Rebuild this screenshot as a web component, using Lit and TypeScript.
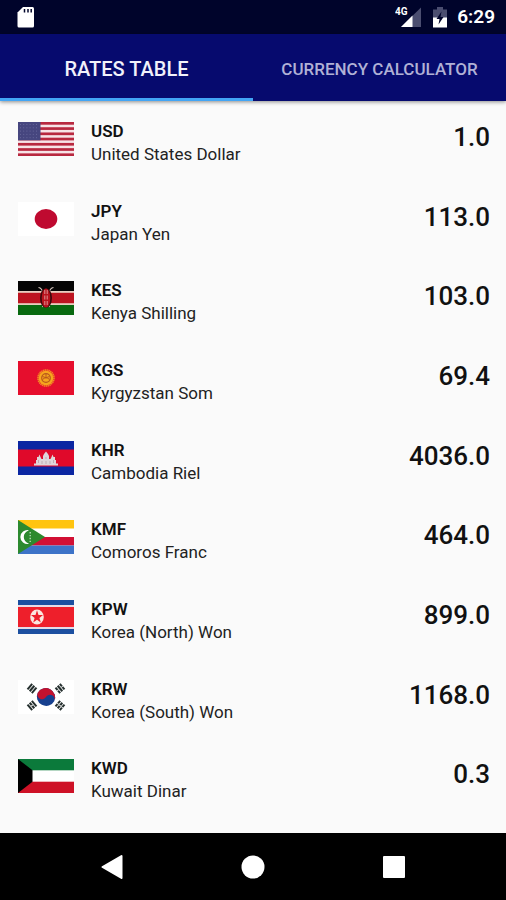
import { LitElement, html, css, svg, type TemplateResult } from "lit";
import { customElement, property, state } from "lit/decorators.js";
import { classMap } from "lit/directives/class-map.js";

interface Rate {
  code: string;
  name: string;
  value: string;
}

const RATES: Rate[] = [
  { code: "USD", name: "United States Dollar", value: "1.0" },
  { code: "JPY", name: "Japan Yen", value: "113.0" },
  { code: "KES", name: "Kenya Shilling", value: "103.0" },
  { code: "KGS", name: "Kyrgyzstan Som", value: "69.4" },
  { code: "KHR", name: "Cambodia Riel", value: "4036.0" },
  { code: "KMF", name: "Comoros Franc", value: "464.0" },
  { code: "KPW", name: "Korea (North) Won", value: "899.0" },
  { code: "KRW", name: "Korea (South) Won", value: "1168.0" },
  { code: "KWD", name: "Kuwait Dinar", value: "0.3" },
];

/* Every flag is drawn on a 56 x 34 canvas. */
const trigram = (x: number, y: number, angle: number, broken: number[]) => svg`
  <g transform="translate(${x} ${y}) rotate(${angle})" fill="#26302f">
    <rect x="-3.6" y="-3.8" width="7.2" height="2" />
    <rect x="-3.6" y="-1" width="7.2" height="2" />
    <rect x="-3.6" y="1.8" width="7.2" height="2" />
    ${broken.map((i) => svg`<rect x="-.4" y=${-3.8 + i * 2.8} width=".8" height="2" fill="#fff" />`)}
  </g>`;

const FLAGS: Record<string, TemplateResult> = {
  USD: svg`
    <rect width="56" height="34" fill="#f7e3e6" />
    ${[0, 1, 2, 3, 4, 5, 6].map(
      (i) => svg`<rect y=${(i * 2 * 34) / 13} width="56" height="2.7" fill="#b8283f" />`
    )}
    <rect width="22.5" height="18.3" fill="#46467f" />
    ${[2.5, 5.8, 9.1, 12.4, 15.7].map(
      (y) => svg`<path d="M2 ${y}H21" stroke="#66669a" stroke-width="1" stroke-dasharray="1 2.2" />`
    )}`,
  JPY: svg`
    <rect width="56" height="34" fill="#fff" />
    <ellipse cx="28" cy="17" rx="11.3" ry="10" fill="#bf0a30" />`,
  KES: svg`
    <rect width="56" height="34" fill="#050505" />
    <rect y="10" width="56" height="14" fill="#e8cfc0" />
    <rect y="11.8" width="56" height="10.4" fill="#bd1420" />
    <rect y="24" width="56" height="10" fill="#08690f" />
    <path d="M20.5 6.5Q24 7 25 12L31.5 26M35.5 6.5Q32 7 31 12L24.5 26" fill="none" stroke="#d9c9c2" stroke-width="1.1" />
    <ellipse cx="28" cy="17" rx="6" ry="9.8" fill="#3d080c" />
    <ellipse cx="28" cy="17" rx="4.3" ry="9.6" fill="#b9121d" />
    <path d="M26.8 9v16M29.2 9v16" stroke="#e3a3a3" stroke-width=".9" stroke-dasharray="4 1.5" />`,
  KGS: svg`
    <rect width="56" height="34" fill="#e60e2d" />
    <circle cx="28" cy="17" r="8" fill="none" stroke="#f08a22" stroke-width="1.6" stroke-dasharray="1.4 .5" />
    <circle cx="28" cy="17" r="7.3" fill="#f6a51d" />
    <circle cx="28" cy="17" r="4.3" fill="none" stroke="#b9581c" stroke-width="1.2" />
    <path d="M24.5 15.5Q28 18 31.5 15.5M24.5 18.5Q28 15 31.5 18.5M28 13v4" fill="none" stroke="#b9581c" stroke-width="1" />`,
  KHR: svg`
    <rect width="56" height="34" fill="#0b26a2" />
    <rect y="8.5" width="56" height="17" fill="#e0092a" />
    <path d="M16 24.5V22.5H18V19H19V16H20.5L21.500 13.5L22.5 16L23.5 18H25V15L26 13L28 10.5L30 13L31 15V18H32.500L33.500 16L34.500 13.5L35.500 16H37V19H38V22.5H40V24.5Z" fill="#ded6da" />
    <path d="M20.5 19v3M24 20v3M28 16v2M28 20v3M32 20v3M35.5 19v3" stroke="#bfaeb4" stroke-width="1" />`,
  KMF: svg`
    <rect width="56" height="34" fill="#fff" />
    <rect width="56" height="8.5" fill="#ffc40f" />
    <rect y="17" width="56" height="8.5" fill="#d21034" />
    <rect y="25.5" width="56" height="8.5" fill="#3d73c8" />
    <path d="M0 0L27 17L0 34Z" fill="#2c8a2f" />
    <path d="M11 10.2A7 7 0 1 0 11 23.8A9 7.5 0 0 1 11 10.2Z" fill="#fff" />
    <path d="M12.2 12v10.5" stroke="#c8e4c8" stroke-width="1.2" stroke-dasharray="1.4 1.5" />`,
  KPW: svg`
    <rect width="56" height="34" fill="#1c4fa0" />
    <rect y="5" width="56" height="24" fill="#e5dbe6" />
    <rect y="7" width="56" height="20" fill="#ee1f2b" />
    <ellipse cx="19" cy="17" rx="6.8" ry="7.6" fill="#fbe6df" />
    <path d="M19 10.3L20.5 15H25L21.4 17.9L22.8 22.6L19 19.7L15.2 22.6L16.6 17.9L13 15H17.5Z" fill="#ee1f2b" />`,
  KRW: svg`
    <rect width="56" height="34" fill="#fff" />
    <g transform="rotate(28 28 17)">
      <ellipse cx="28" cy="17" rx="9.3" ry="8.8" fill="#17408f" />
      <path d="M18.7 17A9.3 8.8 0 0 1 37.3 17A4.65 4.4 0 0 0 28 17A4.65 4.4 0 0 1 18.7 17Z" fill="#c4122f" />
    </g>
    ${trigram(14, 8.5, -50, [])}
    ${trigram(42, 8.5, 50, [0, 2])}
    ${trigram(14, 25.5, 50, [1])}
    ${trigram(42, 25.5, -50, [0, 1, 2])}`,
  KWD: svg`
    <rect width="56" height="34" fill="#fff" />
    <rect width="56" height="11.3" fill="#0b7a3b" />
    <rect y="22.7" width="56" height="11.3" fill="#ce1126" />
    <path d="M0 0L14.5 11.3V22.7L0 34Z" fill="#000" />`,
};

@customElement("currency-flag")
class CurrencyFlag extends LitElement {
  @property() code = "";

  static styles = css`
    :host {
      display: block;
      width: 56px;
      height: 34px;
    }
    .flag {
      display: block;
      width: 100%;
      height: 100%;
    }
  `;

  render() {
    return html`<svg class="flag" viewBox="0 0 56 34" aria-hidden="true">${FLAGS[this.code]}</svg>`;
  }
}

@customElement("status-bar")
class StatusBar extends LitElement {
  static styles = css`
    :host {
      display: flex;
      align-items: center;
      box-sizing: border-box;
      height: 34px;
      padding: 0 11px 0 17px;
      background: #00042b;
      color: #fff;
    }
    .spacer {
      flex: 1;
    }
    .signal {
      margin-right: 11px;
    }
    .battery {
      margin-right: 10px;
    }
    .small {
      font: 700 10px Roboto, sans-serif;
    }
    .clock {
      font-size: 19px;
      line-height: 36px;
      font-weight: 600;
    }
  `;

  render() {
    return html`
      <svg width="18" height="22" viewBox="0 0 18 22" aria-hidden="true">
        <path d="M6 1H15.5Q17 1 17 2.5V20Q17 21.5 15.5 21.5H2Q.5 21.5 .5 20V6.5Z" fill="#fff" />
        <path d="M7.5 3v3.5M11 3v3.5M14.2 3v3.5" stroke="#00042b" stroke-width="1.5" />
      </svg>
      <span class="spacer"></span>
      <svg class="signal" width="27" height="22" viewBox="0 0 27 22" aria-hidden="true">
        <path d="M6 21L26 1.5V21Z" fill="#4b4e70" />
        <path d="M6 21L17.5 9.5V21Z" fill="#fff" />
        <text class="small" x="0" y="9" fill="#fff">4G</text>
      </svg>
      <svg class="battery" width="14" height="22" viewBox="0 0 14 22" aria-hidden="true">
        <path d="M0 3.5H4V1H10V3.5H14V12H0Z" fill="#4b4e70" />
        <path d="M0 11.5H14V21.5H0Z" fill="#fff" />
        <path d="M8.5 5.5L3.5 13H6.5L5.5 18.5L10.5 11H7.5Z" fill="#00042b" />
      </svg>
      <span class="clock">6:29</span>
    `;
  }
}

@customElement("system-nav")
class SystemNav extends LitElement {
  static styles = css`
    :host {
      display: flex;
      justify-content: center;
      align-items: center;
      gap: 93px;
      height: 67px;
      background: #000;
    }
    .key {
      display: grid;
      place-items: center;
      width: 48px;
      height: 48px;
      padding: 0;
      border: 0;
      background: none;
    }
  `;

  render() {
    return html`
      <button class="key" aria-label="Back">
        <svg width="22" height="26" viewBox="0 0 22 26">
          <path d="M20.5 2L1.5 13L20.5 24Z" fill="#fff" stroke="#fff" stroke-width="2" stroke-linejoin="round" />
        </svg>
      </button>
      <button class="key" aria-label="Home">
        <svg width="24" height="24" viewBox="0 0 24 24"><circle cx="12" cy="12" r="11.5" fill="#fff" /></svg>
      </button>
      <button class="key" aria-label="Recent apps">
        <svg width="22" height="22" viewBox="0 0 22 22"><rect width="22" height="22" rx="1" fill="#fff" /></svg>
      </button>
    `;
  }
}

@customElement("app-root")
class AppRoot extends LitElement {
  @state() private tab = 0;

  static styles = css`
    :host {
      display: flex;
      flex-direction: column;
      min-height: 100vh;
      background: #fafafa;
      color: #111;
      font-family: Roboto, "Noto Sans", sans-serif;
    }
    .tabs {
      display: grid;
      grid-template-columns: 1fr 1fr;
      height: 67px;
      background: #060a6e;
      box-shadow: 0 1px 4px rgba(0, 0, 0, 0.45);
    }
    .tab {
      padding: 5px 0 0;
      border: 0;
      border-bottom: 3px solid transparent;
      background: none;
      color: #b0b1d6;
      font-family: inherit;
      font-size: 17px;
      font-weight: 500;
      white-space: nowrap;
    }
    .tab.active {
      border-bottom-color: #42a5f5;
      color: #f1f1fa;
      font-size: 20px;
    }
    .rates,
    .rows {
      display: flex;
      flex: 1;
      flex-direction: column;
    }
    .rates {
      padding-bottom: 15px;
    }
    .row {
      display: grid;
      grid-template-columns: 56px 1fr auto;
      column-gap: 17px;
      align-items: start;
      flex: 1;
      box-sizing: border-box;
      min-height: 78px;
      padding: 19px 16px 0 18px;
      text-align: left;
    }
    .cell {
      padding: 0;
      font-weight: 400;
    }
    .flag {
      padding-top: 2px;
    }
    .code,
    .name {
      display: block;
      font-size: 17px;
      line-height: 23px;
    }
    .code {
      font-weight: 600;
    }
    .name {
      color: #222;
    }
    .value {
      font-size: 26px;
      line-height: 34px;
      font-weight: 500;
    }
  `;

  private renderTab(label: string, index: number) {
    const active = this.tab === index;
    return html`<button
      class=${classMap({ tab: true, active })}
      role="tab"
      aria-selected=${active ? "true" : "false"}
      @click=${() => (this.tab = index)}
    >
      ${label}
    </button>`;
  }

  render() {
    return html`
      <status-bar></status-bar>
      <div class="tabs" role="tablist">
        ${this.renderTab("RATES TABLE", 0)} ${this.renderTab("CURRENCY CALCULATOR", 1)}
      </div>
      <table class="rates" aria-label="Exchange rates">
        <tbody class="rows">
          ${RATES.map(
            (r) => html`<tr class="row">
              <td class="cell flag"><currency-flag .code=${r.code}></currency-flag></td>
              <th class="cell" scope="row">
                <span class="code">${r.code}</span>
                <span class="name">${r.name}</span>
              </th>
              <td class="cell value">${r.value}</td>
            </tr>`
          )}
        </tbody>
      </table>
      <system-nav></system-nav>
    `;
  }
}
